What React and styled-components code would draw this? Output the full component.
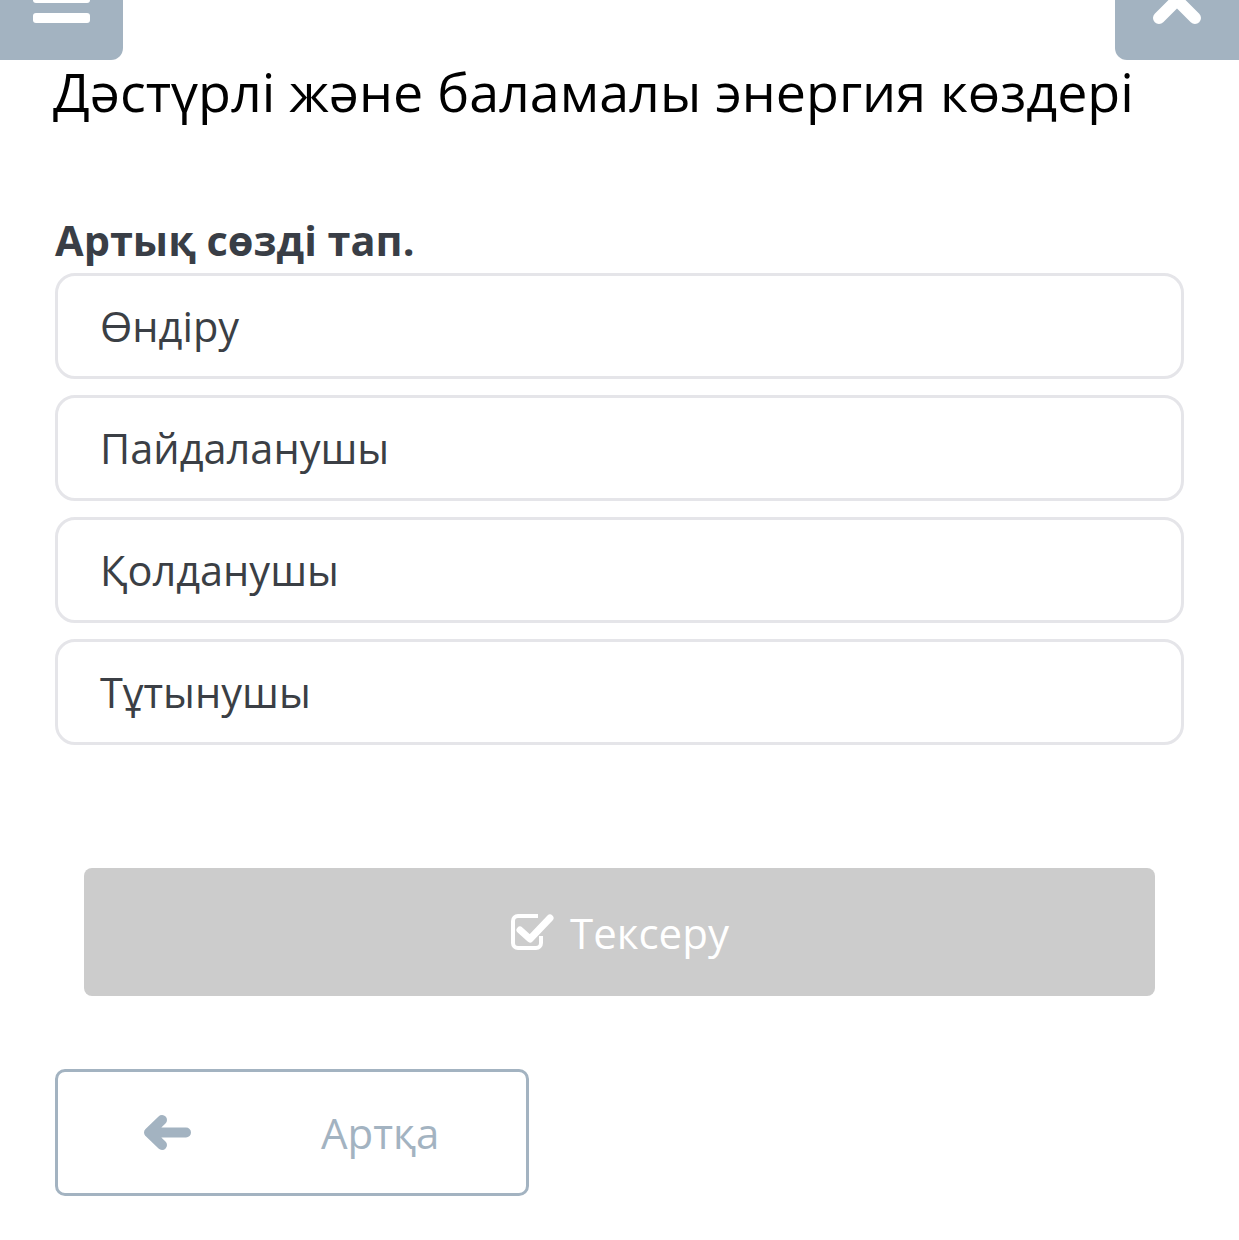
import React from 'react';
import styled, { createGlobalStyle } from 'styled-components';

const Global = createGlobalStyle`
  html, body {
    margin: 0;
    padding: 0;
    background: #ffffff;
    font-family: "Open Sans", "Noto Sans", sans-serif;
  }
`;

const Page = styled.div`
  width: 1239px;
  min-height: 1240px;
  background: #fff;
`;

const TopBar = styled.div`
  display: flex;
  justify-content: space-between;
  height: 60px;
`;

const CornerButton = styled.div`
  width: ${p => p.w}px;
  height: 60px;
  background: #a3b3c1;
  border-radius: ${p => (p.side === 'left' ? '0 0 12px 0' : '0 0 0 12px')};
  overflow: hidden;
`;

const Content = styled.div`
  padding: 0 55px;
`;

const Title = styled.h1`
  margin: -2px 0 0 -2px;
  font-weight: 400;
  font-size: 53.8px;
  line-height: 66px;
  color: #000;
`;

const Question = styled.h2`
  margin: 90px 0 0 0;
  font-weight: 700;
  font-size: 41.5px;
  line-height: 52px;
  color: #393e46;
`;

const Options = styled.div`
  display: flex;
  flex-direction: column;
  gap: 16px;
  margin-top: 7px;
`;

const Option = styled.div`
  box-sizing: border-box;
  height: 106px;
  border: 3px solid #e5e5e9;
  border-radius: 20px;
  display: flex;
  align-items: center;
  padding-left: 42px;
  font-size: 41.5px;
  color: #3b3f45;
`;

const CheckButton = styled.div`
  margin: 123px 29px 0;
  height: 128px;
  border-radius: 8px;
  background: #cccccc;
  color: #fff;
  display: flex;
  align-items: center;
  justify-content: center;
  gap: 16px;
  font-size: 42px;
`;

const BackButton = styled.div`
  box-sizing: border-box;
  margin-top: 73px;
  width: 474px;
  height: 127px;
  border: 3px solid #a3b3c1;
  border-radius: 10px;
  display: flex;
  align-items: center;
  color: #a3b3c1;
  font-size: 42px;
  padding-left: 85px;

  span {
    margin-left: 130px;
  }
`;

const MenuIcon = () => (
  <svg width="123" height="60" viewBox="0 0 123 60">
    <rect x="33" y="-7" width="57" height="10" rx="3" fill="#fff" />
    <rect x="33" y="13" width="57" height="10" rx="3" fill="#fff" />
  </svg>
);

const CloseIcon = () => (
  <svg width="124" height="60" viewBox="0 0 124 60">
    <path
      d="M44 18 L80 -18 M44 -18 L80 18"
      stroke="#fff"
      strokeWidth="12"
      strokeLinecap="round"
      fill="none"
    />
  </svg>
);

const CheckSquareIcon = () => (
  <svg width="44" height="40" viewBox="0 0 44 40">
    <path
      d="M28 4 H8 a5 5 0 0 0 -5 5 V31 a5 5 0 0 0 5 5 H26 a5 5 0 0 0 5 -5 V24"
      stroke="#fff"
      strokeWidth="4"
      fill="none"
    />
    <path
      d="M10 18 L20 27 L40 6"
      stroke="#fff"
      strokeWidth="7"
      strokeLinecap="round"
      strokeLinejoin="round"
      fill="none"
    />
  </svg>
);

const ArrowIcon = () => (
  <svg width="48" height="40" viewBox="0 0 48 40">
    <path
      d="M43 19.5 H10 M19 7 L6 19.5 L19 32"
      stroke="#a3b3c1"
      strokeWidth="10"
      strokeLinecap="round"
      strokeLinejoin="round"
      fill="none"
    />
  </svg>
);

const options = ['Өндіру', 'Пайдаланушы', 'Қолданушы', 'Тұтынушы'];

export default function App() {
  return (
    <Page>
      <Global />
      <TopBar>
        <CornerButton side="left" w={123}>
          <MenuIcon />
        </CornerButton>
        <CornerButton side="right" w={124}>
          <CloseIcon />
        </CornerButton>
      </TopBar>
      <Content>
        <Title>Дәстүрлі және баламалы энергия көздері</Title>
        <Question>Артық сөзді тап.</Question>
        <Options>
          {options.map(o => (
            <Option key={o}>{o}</Option>
          ))}
        </Options>
        <CheckButton>
          <CheckSquareIcon />
          Тексеру
        </CheckButton>
        <BackButton>
          <ArrowIcon />
          <span>Артқа</span>
        </BackButton>
      </Content>
    </Page>
  );
}
